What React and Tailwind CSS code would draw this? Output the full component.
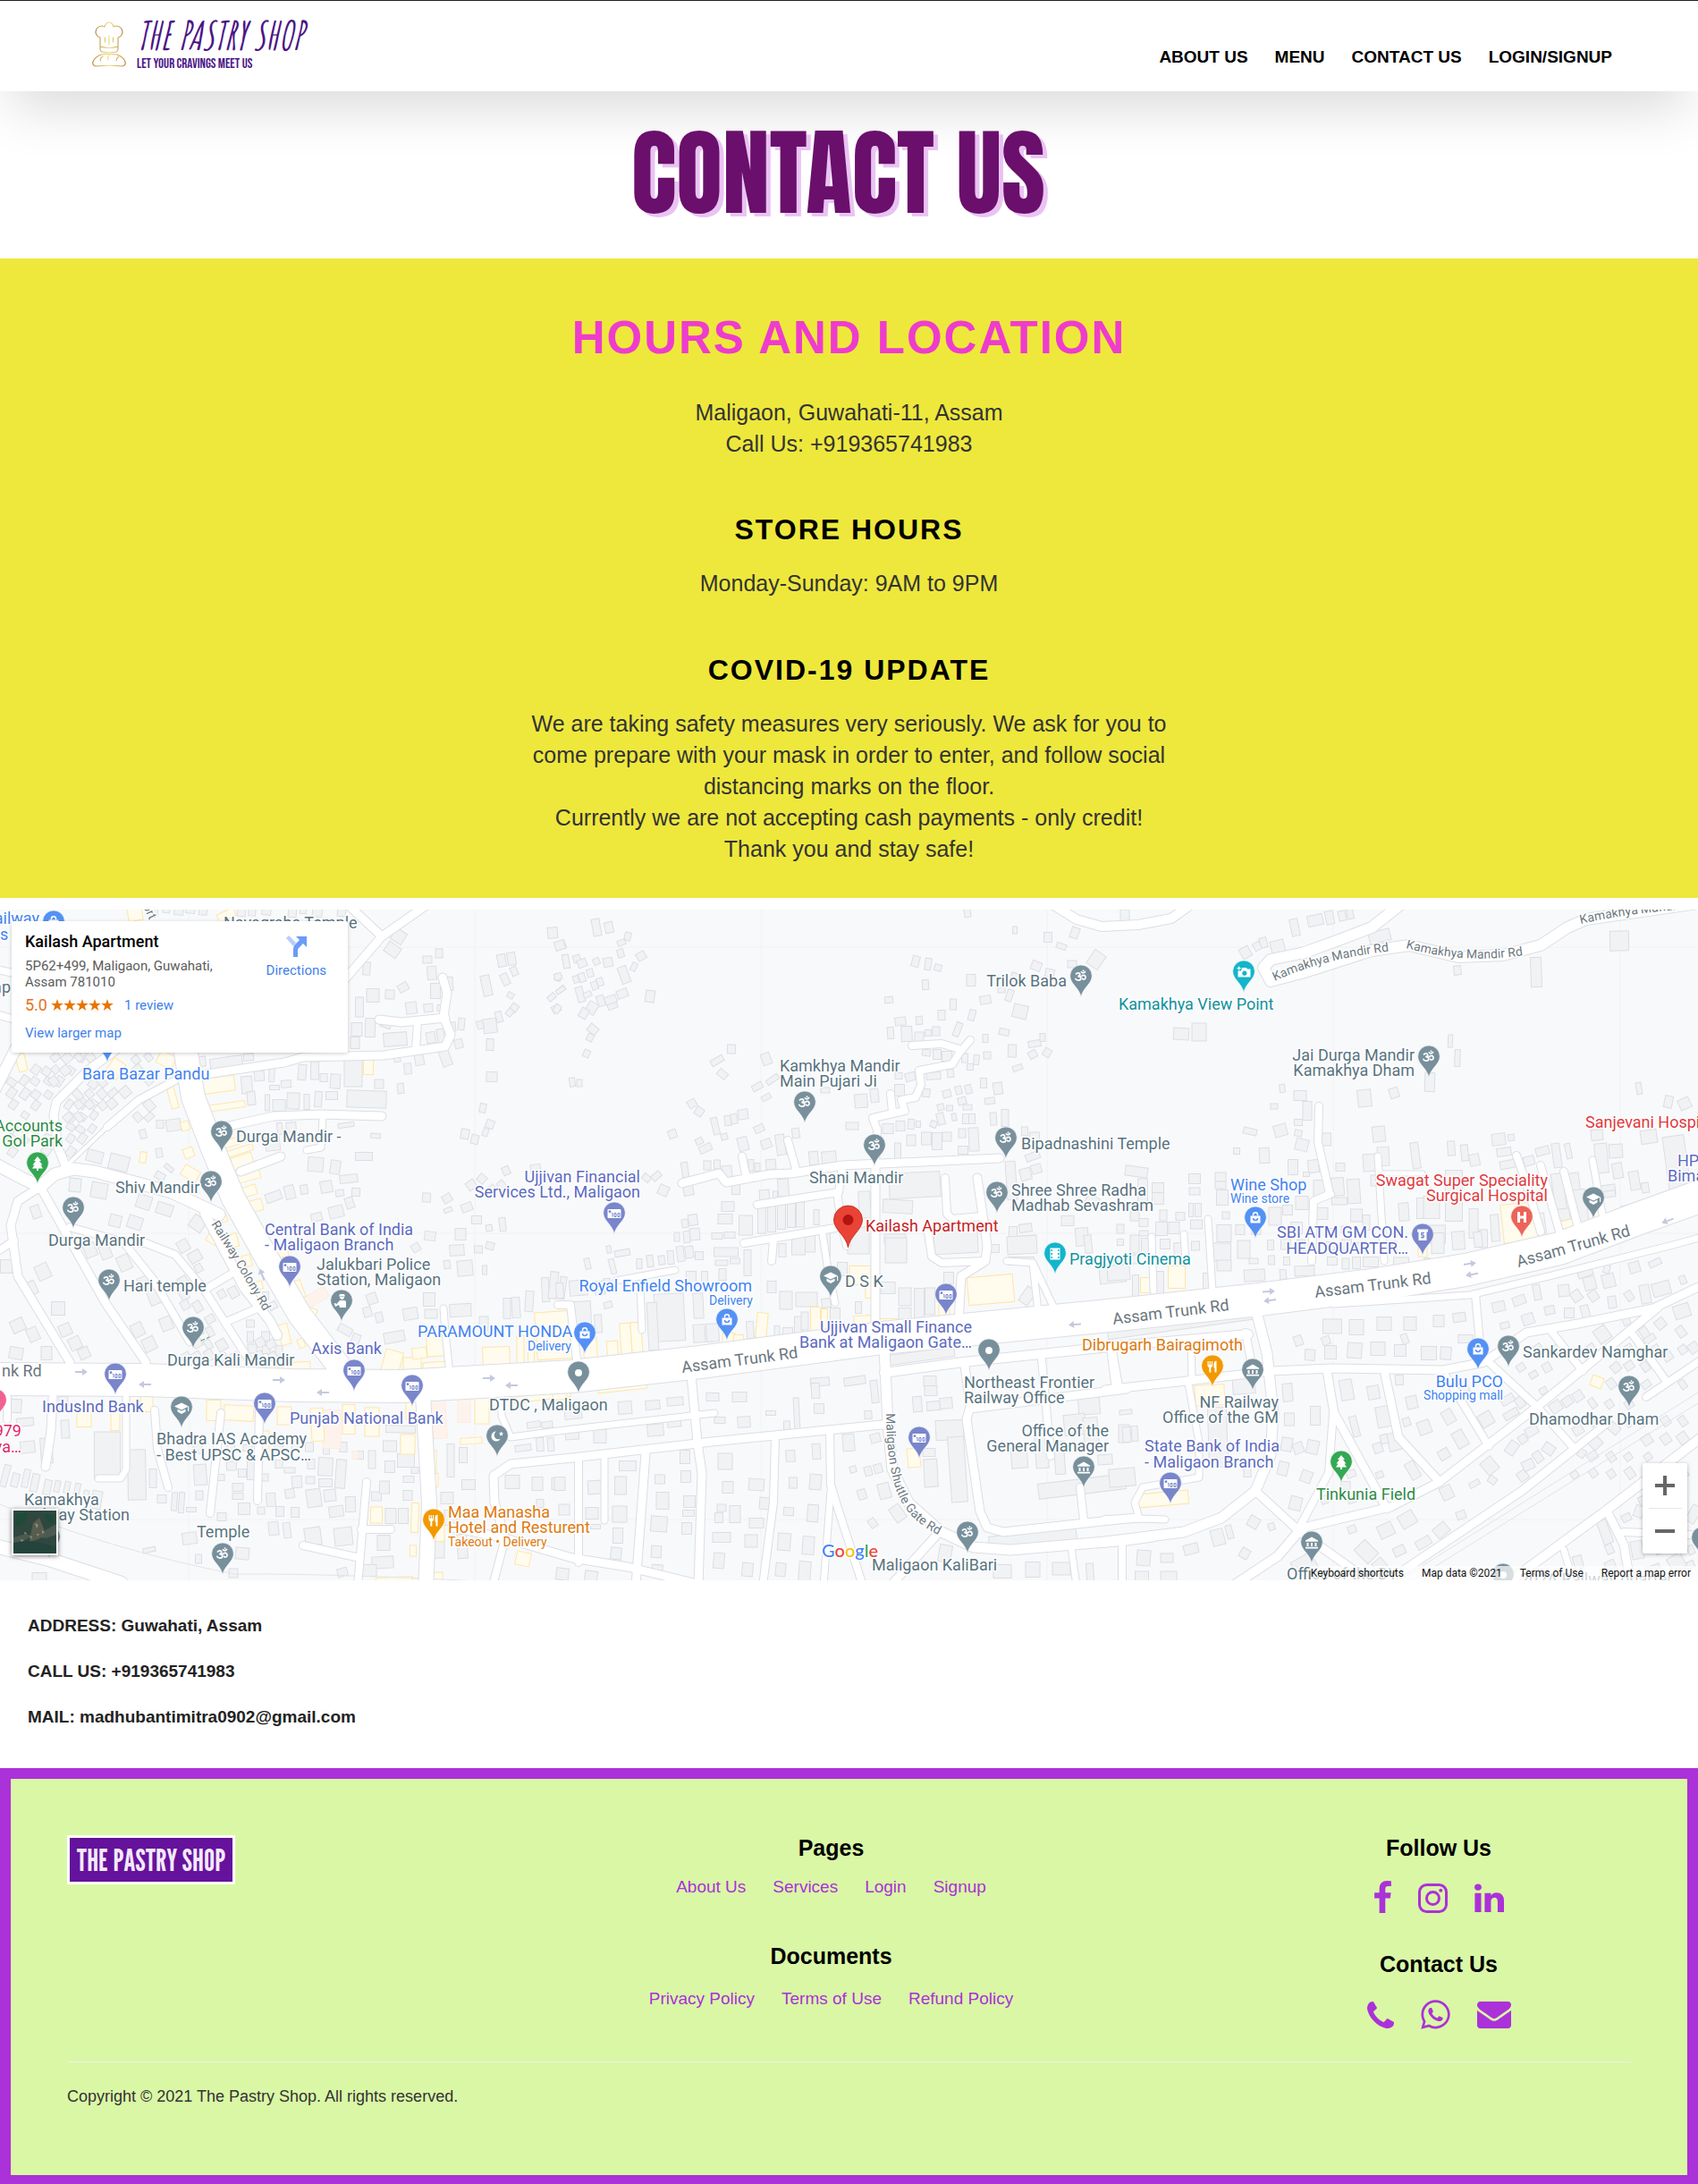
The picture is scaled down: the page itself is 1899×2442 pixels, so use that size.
import React from 'react';
import { FaWhatsapp } from 'react-icons/fa';

/* ------------------------------------------------------------------ */
/* Map data: every sheet has its own origin and scale                  */
/* ------------------------------------------------------------------ */

const SHEETS = {
  A: [0, -7, 2.45],
  B: [0, 363, 2.45],
  C: [620, -7, 2.45],
  D: [620, 363, 2.45],
  E: [1240, -7, 2.379],
  F: [1240, 363, 2.379],
  M: [0, 0, 1],
};

const at = (sheet, x, y) => {
  const [ox, oy, sx] = SHEETS[sheet];
  return sheet === 'M' ? [x, y] : [Math.round(ox + x / sx), Math.round(oy + y / 3)];
};

const ROADS = [
  // [sheet, width, x, y, x, y, ...]
  ['M', 36, -20, 525, 163, 526, 327, 532, 449, 533, 640, 522, 783, 506, 987, 479, 1260, 452, 1408, 436, 1534, 420, 1639, 403, 1744, 379, 1828, 347, 1920, 314],
  ['M', 26, 204, 100, 208, 160, 216, 210, 239, 270, 261, 323, 302, 396, 335, 453, 388, 522],
  ['A', 9, 1200, -20, 1045, 110, 940, 260],
  ['A', 9, 930, -20, 1045, 110],
  ['A', 9, 500, 585, 780, 535, 830, 515, 1050, 510, 1220, 480, 1235, 440, 1215, 380, 1225, 300, 1212, 250],
  ['A', 9, 1040, 390, 1100, 400, 1220, 385],
  ['A', 8, 1145, 400, 1140, 490],
  ['A', 9, 600, 755, 650, 740, 750, 715, 880, 708, 1045, 715],
  ['A', 7, 885, 715, 880, 820, 840, 828],
  ['A', 9, 660, 900, 770, 850],
  ['A', 12, -20, 640, 60, 450],
  ['A', 9, 330, 480, 240, 560, 155, 665, 148, 710, 160, 820, 180, 880],
  ['A', 8, 480, 595, 380, 660, 295, 750],
  ['A', 4, 295, 750, 190, 870],
  ['A', 13, -20, 870, 60, 920, 110, 950, 150, 910, 200, 890, 260, 900, 470, 970, 600, 1045],
  ['A', 9, 110, 950, 50, 1000, 30, 1080, 50, 1250, 190, 1540],
  ['A', 9, 110, 950, 170, 1080, 210, 1170, 290, 1340, 400, 1540],
  ['A', 8, 190, 1085, 330, 1135, 400, 1140, 480, 1180, 560, 1300, 680, 1530],
  ['A', 8, -20, 370, 60, 395],
  ['A', 8, -20, 220, 60, 240],
  ['A', 10, 560, 1040, 600, 1130, 670, 1290, 740, 1400, 760, 1450],
  ['B', 8, 560, 185, 640, 130],
  ['B', 8, 620, 295, 710, 245],
  ['B', 8, 340, 30, 420, 150, 520, 360],
  ['B', 8, -10, 60, 40, 20],
  ['B', 9, 145, 550, 140, 660, 125, 780],
  ['B', 8, 20, 550, 20, 620],
  ['B', 7, 345, 550, 345, 790, 330, 820, 270, 820],
  ['B', 8, 425, 590, 430, 720, 460, 850],
  ['B', 8, 605, 600, 575, 935],
  ['B', 8, 710, 590, 705, 895],
  ['B', 16, 1160, 540, 1175, 900, 1165, 1200],
  ['B', 7, 1230, 440, 1220, 330, 1215, 250],
  ['B', 8, 1005, 830, 980, 1180],
  ['B', 8, 990, 990, 1070, 990],
  ['B', 8, 830, 1045, 975, 1082],
  ['B', 8, 1350, 1180, 1385, 1020],
  ['B', 7, 1375, 560, 1375, 610, 1400, 680, 1568, 655, 1958, 600],
  ['B', 9, 1385, 1020, 1355, 900, 1352, 810, 1400, 770, 1568, 750, 1950, 695, 2440, 635],
  ['B', 9, 1240, 985, 1385, 1020, 1568, 1085, 1720, 1115, 1900, 1170],
  ['B', 15, -20, 1045, 130, 1090, 330, 1170],
  ['D', 9, 375, 470, 393, 700, 405, 800, 395, 1180],
  ['D', 9, 250, 735, 222, 1180],
  ['D', 8, 65, 760, 65, 1100],
  ['D', 7, 138, 750, 138, 960],
  ['D', 8, 605, 685, 600, 900, 572, 1180],
  ['D', 8, 755, 660, 757, 840, 775, 910, 845, 1180],
  ['D', 7, 757, 860, 738, 1180],
  ['D', 11, 903, 380, 915, 640, 925, 790, 970, 900, 1060, 1000, 1150, 1050, 1250, 1060, 1568, 1025, 1640, 1015],
  ['D', 10, 905, 465, 1120, 430, 1568, 372, 1900, 335],
  ['D', 9, 1125, 440, 1140, 580, 1130, 620, 1165, 930, 1185, 985, 1230, 998, 1568, 955, 1600, 950],
  ['D', 9, 1140, 585, 1568, 520],
  ['D', 8, 1335, 420, 1360, 745],
  ['D', 8, 1528, 390, 1545, 510],
  ['D', 8, 1440, 850, 1450, 960],
  ['D', 9, 1045, 1010, 920, 1180],
  ['D', 7, 1415, 1050, 1430, 1180],
  ['D', 8, 10, 238, 45, 238, 62, 420],
  ['D', 7, 235, 170, 240, 320],
  ['D', 7, 170, 155, 330, 120],
  ['D', 8, 600, 20, 595, 90],
  ['D', 9, 880, -240, 880, 310],
  ['D', 8, 1070, -190, 1075, -70, 1090, -50, 1170, -60],
  ['D', 9, 1160, -190, 1187, 40, 1180, 90, 1115, 140, 1108, 300],
  ['D', 8, 1025, -5, 1035, 75, 1060, 95, 1180, 90],
  ['D', 7, 1240, 90, 1310, 95, 1325, 260],
  ['D', 7, 1310, 95, 1370, 250],
  ['D', 7, 735, 0, 750, 120, 770, 230],
  ['C', 8, 520, 1140, 770, 1090],
  ['C', 8, 775, 970, 790, 1090, 800, 1150],
  ['C', 9, 350, 940, 450, 905, 470, 935, 590, 910, 650, 905, 790, 880, 1220, 855],
  ['C', 8, 515, 850, 525, 910],
  ['C', 8, 640, 795, 665, 900],
  ['C', 8, 555, 1010, 780, 970, 790, 880],
  ['C', 8, 880, 870, 885, 760, 872, 720, 960, 695, 950, 660, 990, 650, 1005, 610, 1000, 560, 1090, 540, 1110, 500, 1140, 460],
  ['C', 8, 1110, 490, 1060, 470, 980, 478],
  ['C', 8, 920, 640, 925, 700],
  ['C', 10, 1360, 0, 1430, 55, 1500, 78, 1600, 72, 1690, 50, 1760, -10],
  ['E', 12, 790, -10, 700, 80, 600, 130, 520, 165, 430, 190, 412, 215, 430, 260, 520, 230, 700, 160, 800, 140, 930, 180, 1050, 175, 1150, 140, 1220, 80, 1270, 55, 1568, 0],
  ['E', 8, 560, 680, 556, 800, 585, 960],
  ['E', 8, 540, 1200, 545, 1000, 590, 975],
  ['E', 7, 715, 850, 732, 1200],
  ['E', 5, 730, 905, 835, 905],
  ['E', 7, 265, 1060, 275, 1300],
  ['E', 7, 115, 1120, 120, 1300],
  ['E', 7, 200, 1110, 205, 1200],
  ['E', 8, 1085, 845, 1110, 940, 1150, 1100],
  ['E', 8, 1150, 880, 1200, 1100],
  ['E', 8, 1210, 900, 1250, 1090],
  ['E', 7, 1287, 860, 1315, 1060],
  ['F', 7, 600, 235, 960, 205, 1180, 138, 1500, 35, 1590, 5],
  ['F', 9, -10, 522, 230, 490, 430, 460, 590, 450, 890, 455, 1000, 430, 1110, 330, 1250, 300, 1450, 250, 1590, 165],
  ['F', 11, 395, 270, 420, 400, 438, 600, 430, 740, 390, 860, 300, 950, 200, 1000, -10, 1032],
  ['F', 8, 975, 200, 990, 400, 1010, 430, 1140, 580, 1240, 720],
  ['F', 7, 220, 350, 222, 480],
  ['F', 8, 365, 330, 385, 470],
  ['F', 8, 5, 380, 20, 520],
  ['F', 7, 212, 500, 240, 700, 240, 815, 90, 850, 68, 900, 80, 955, 150, 958],
  ['F', 8, -10, 957, 80, 955],
  ['F', 9, 1460, 245, 1140, 580, 880, 830, 750, 915, 500, 990],
  ['F', 8, 1180, 330, 1260, 460],
  ['F', 8, 1395, 335, 1480, 485],
  ['F', 8, 1430, 545, 1590, 410],
  ['F', 8, 1240, 720, 1320, 640],
  ['F', 9, 580, 460, 600, 600, 740, 920],
  ['F', 8, 597, 600, 585, 800, 505, 990],
  ['F', 9, 735, 470, 770, 680, 880, 830],
  ['F', 8, 900, 480, 1010, 710],
  ['F', 9, 390, 860, 510, 1000, 700, 1170],
  ['F', 10, 505, 1000, 450, 1080, 330, 1180],
  ['F', 9, 1240, 720, 1100, 860, 780, 1130, 700, 1180],
  ['F', 10, 1590, 670, 1320, 930, 1060, 1170],
  ['F', 9, 1330, 940, 1370, 1040, 1390, 1180],
  ['F', 8, 1370, 1000, 1590, 1010],
  ['F', 8, 35, 1040, 35, 1180],
  ['F', 7, 1210, 1060, 1235, 1160],
].map(([s, w, ...c]) => {
  const pts = [];
  for (let i = 0; i < c.length; i += 2) pts.push(at(s, c[i], c[i + 1]));
  return { w, pts, d: 'M' + pts.map((p) => p.join(' ')).join('L') };
});

// Loose buildings: sheet then [centre x, centre y, width, height, turn]
const LOOSE = {
  A: [
    [1515, 98, 26, 36, -5], [1535, 140, 26, 26, -20], [1202, 167, 20, 30, 0], [1172, 190, 24, 24, 0], [1184, 235, 24, 46, -4], [1232, 270, 18, 44, -4],
    [1375, 192, 22, 42, -10], [1402, 186, 22, 42, -10], [1385, 255, 20, 40, -25], [1408, 228, 16, 30, -25], [1334, 275, 24, 68, -12], [1528, 248, 18, 22, 20],
    [1538, 288, 20, 16, -40], [1511, 316, 22, 18, -40], [1550, 195, 18, 44, -10], [1400, 308, 16, 18, 30], [1525, 354, 22, 24, -30], [1408, 352, 20, 28, 35],
    [1366, 380, 18, 36, -15], [1396, 366, 18, 24, 40], [1342, 410, 36, 48, -8], [1316, 408, 16, 28, -15], [1342, 475, 20, 40, 2], [1263, 405, 16, 38, 6],
    [1240, 415, 16, 30, -5], [1258, 472, 22, 30, -15], [1348, 583, 30, 32, 2], [1106, 283, 28, 28, -30], [1068, 306, 24, 30, 2], [1022, 308, 34, 44, 0],
    [1128, 352, 30, 38, -8], [1173, 350, 24, 28, -5], [1093, 110, 34, 42, 32], [1075, 155, 40, 40, 35], [1005, 220, 20, 42, 4], [986, 348, 22, 66, 0],
    [1194, 295, 26, 52, 0], [1205, 350, 14, 22, 0], [1015, 416, 26, 64, 2], [978, 424, 30, 46, 0], [1058, 402, 30, 30, 20], [1083, 456, 64, 46, -4],
    [1180, 450, 24, 36, -10], [1208, 445, 20, 44, -10], [972, 468, 24, 40, 0], [620, 535, 88, 36, -8], [548, 532, 30, 32, -4], [680, 516, 26, 24, -5],
    [1220, 516, 28, 60, -20], [1150, 526, 24, 36, -10], [1088, 520, 18, 28, -10], [1118, 554, 20, 36, -5], [1098, 622, 18, 32, -6], [1040, 606, 24, 30, 0],
    [1004, 658, 108, 56, 2], [967, 568, 50, 96, 0], [918, 597, 28, 48, 4], [888, 584, 20, 26, 0], [862, 560, 22, 60, 0], [827, 567, 22, 50, 4], [746, 574, 14, 52, 4],
    [676, 608, 30, 56, -4], [688, 654, 22, 44, -5], [710, 578, 26, 34, -5], [752, 619, 26, 14, 0], [785, 605, 28, 24, -5], [765, 677, 34, 40, 0], [733, 670, 12, 54, 0],
    [804, 662, 34, 54, 2], [840, 666, 14, 50, 0], [872, 656, 20, 52, 4], [908, 646, 32, 28, 0], [948, 745, 44, 14, -8], [1029, 781, 26, 14, 4], [1324, 686, 18, 30, 12],
    [1274, 774, 22, 34, 10], [1302, 793, 20, 30, 14], [1330, 768, 14, 26, 18], [1342, 742, 22, 28, 20], [998, 849, 46, 26, 0], [865, 876, 42, 48, 4], [918, 884, 28, 44, 8],
    [955, 925, 48, 28, -6], [895, 952, 32, 38, -10], [932, 971, 22, 22, -8], [976, 968, 22, 26, 4], [747, 808, 38, 44, -6], [798, 766, 28, 60, -5], [768, 756, 14, 40, -8],
    [1386, 898, 20, 26, -25], [1468, 892, 26, 30, -8], [1168, 986, 22, 30, 2], [1228, 1028, 22, 14, -20], [1225, 990, 24, 26, -30], [1280, 1020, 30, 28, -20],
    [1320, 925, 22, 26, 40], [1345, 960, 26, 20, -45], [1290, 945, 24, 30, -35], [1374, 945, 20, 26, -40], [1306, 1062, 28, 26, 0], [1262, 1110, 30, 40, 0],
    [1376, 1078, 16, 46, -6], [1340, 1088, 16, 22, -10], [1178, 1115, 30, 30, 8], [750, 985, 44, 30, -20], [795, 970, 26, 44, -15], [834, 960, 20, 30, -10],
    [920, 1035, 38, 40, -14], [958, 1005, 22, 36, -18], [868, 1052, 30, 26, -14], [475, 743, 38, 40, -8], [438, 740, 20, 26, 0], [393, 774, 18, 30, -15],
    [437, 838, 16, 30, -10], [260, 850, 44, 40, 15], [327, 870, 54, 50, 14], [464, 887, 26, 16, 40], [438, 915, 26, 24, 30], [206, 946, 32, 46, 6], [273, 962, 44, 50, 10],
    [395, 1002, 38, 46, 18], [450, 1026, 44, 40, 18], [316, 1066, 32, 40, 14], [370, 1072, 38, 42, 18], [542, 1074, 38, 44, 35], [98, 1036, 24, 42, -20],
  ],
  B: [
    [118, 125, 36, 50, -25], [84, 182, 34, 44, -25], [160, 248, 36, 46, 0], [50, 305, 36, 42, -25], [90, 335, 30, 44, -25], [45, 400, 36, 40, 10], [128, 400, 30, 44, 0],
    [180, 320, 32, 40, -25], [205, 365, 32, 42, -25], [230, 400, 30, 36, -25], [247, 55, 32, 44, -22], [290, 60, 30, 44, -22], [18, 108, 32, 44, 0], [340, 95, 34, 50, -25],
    [395, 165, 30, 44, -22], [425, 210, 34, 52, -22], [455, 300, 32, 46, -22], [378, 320, 32, 46, -25], [410, 370, 34, 46, -25], [502, 40, 30, 40, -30], [535, 75, 34, 36, -30],
    [1140, 45, 22, 26, -30], [1252, 55, 38, 36, -4], [1310, 50, 22, 24, 0], [1342, 40, 22, 24, 15], [1275, 115, 42, 50, -5], [1327, 120, 12, 30, 0], [1226, 102, 16, 28, -8],
    [1175, 220, 32, 44, 0], [1262, 256, 60, 42, -3], [1020, 216, 26, 36, -18], [1006, 260, 22, 34, -14], [1040, 280, 20, 34, -14], [1125, 266, 38, 40, -10], [1182, 266, 34, 30, 0],
    [1080, 345, 56, 36, -10], [945, 320, 38, 26, 30], [975, 350, 22, 34, 20], [1388, 248, 20, 70, 0], [1414, 245, 22, 70, -4], [1450, 226, 22, 70, 4], [1495, 185, 20, 80, -3],
    [1516, 170, 22, 90, 6], [1540, 180, 18, 76, 8], [1325, 300, 24, 48, 0], [44, 575, 30, 46, 4], [174, 568, 24, 46, 0], [128, 725, 32, 84, -4], [68, 630, 46, 28, -4], [76, 715, 40, 38, -6],
    [178, 655, 22, 60, -4], [295, 740, 70, 156, 0], [376, 806, 50, 168, -1], [420, 820, 20, 64, 0], [550, 808, 34, 68, -4], [606, 816, 20, 20, 0], [635, 778, 26, 30, 0], [665, 800, 22, 26, 0],
    [692, 790, 26, 70, 0], [724, 816, 20, 24, 0], [794, 793, 30, 18, 0], [813, 830, 26, 40, -4], [652, 850, 30, 28, 0], [652, 878, 30, 20, 0], [793, 870, 24, 30, -10], [742, 892, 24, 46, -4],
    [670, 922, 32, 40, 0], [893, 780, 40, 60, 3], [934, 804, 28, 96, 4], [892, 834, 36, 26, 0], [860, 886, 38, 60, -8], [905, 876, 32, 40, -6], [960, 906, 28, 50, -2], [920, 930, 40, 36, -8],
    [1053, 850, 28, 42, 0], [1070, 946, 30, 50, 0], [1104, 946, 26, 50, 0], [750, 988, 26, 46, -6], [786, 992, 20, 52, -8], [858, 1014, 44, 60, -8], [940, 1015, 50, 60, -6], [1052, 1036, 34, 50, 0],
    [1048, 1100, 60, 40, -3], [1006, 1128, 50, 40, 0], [410, 1060, 34, 14, -12], [663, 1070, 36, 40, 6], [640, 1136, 24, 30, 0], [938, 1134, 28, 26, -15], [520, 1020, 40, 40, -8], [544, 1088, 18, 30, 0],
    [1067, 710, 36, 36, 0], [1112, 758, 46, 46, 0], [1018, 756, 20, 60, 0], [988, 740, 16, 26, 0], [1136, 793, 20, 20, 0], [1068, 780, 26, 40, 0], [1098, 654, 80, 24, 2], [1120, 823, 30, 20, 0],
    [1224, 886, 34, 40, 0], [1236, 950, 34, 50, 0], [1204, 1056, 30, 60, 0], [1266, 1046, 28, 80, -4], [1283, 840, 36, 34, 0], [1236, 760, 20, 110, 0], [1268, 740, 22, 50, 0],
    [1404, 830, 38, 46, 0], [1472, 838, 30, 46, 0], [1530, 836, 34, 40, 0], [1480, 902, 20, 26, 0], [1545, 925, 30, 36, 0], [1434, 716, 44, 20, -8], [1480, 706, 20, 46, -4], [1508, 704, 18, 46, -4],
    [1462, 640, 36, 22, -8], [1500, 640, 30, 20, -8], [108, 1148, 40, 26, 0], [42, 826, 20, 46, 15], [15, 810, 16, 76, 15], [72, 820, 18, 60, 12], [96, 835, 20, 60, 12], [130, 850, 20, 50, 12], [156, 845, 14, 40, 12], [184, 850, 14, 40, 12],
    [210, 860, 14, 50, 12], [235, 880, 14, 40, 12], [265, 890, 26, 60, 10], [443, 888, 24, 26, 0], [478, 896, 14, 60, 4], [498, 900, 14, 70, 4], [524, 925, 26, 16, 0], [608, 948, 24, 26, 0],
  ],
  C: [
    [115, 80, 22, 56, -10], [150, 82, 22, 36, -12], [15, 140, 28, 30, -18], [200, 112, 16, 28, 14], [184, 132, 22, 18, -20], [181, 167, 18, 26, -18], [238, 178, 24, 26, -30],
    [33, 195, 18, 46, -10], [61, 186, 20, 24, -20], [77, 202, 24, 28, -20], [115, 194, 18, 20, -25], [148, 199, 24, 30, -10], [217, 212, 14, 28, 25], [192, 240, 24, 56, -20],
    [58, 255, 14, 24, -18], [76, 250, 18, 30, -18], [97, 234, 16, 26, -15], [10, 246, 20, 22, -18], [16, 290, 26, 16, -35], [110, 275, 16, 28, -20], [126, 264, 16, 26, -20],
    [70, 305, 20, 50, -16], [90, 306, 22, 18, -25], [128, 328, 20, 36, -18], [154, 323, 32, 26, -20], [185, 304, 30, 26, -20], [160, 345, 26, 18, -20], [104, 350, 26, 38, 30],
    [80, 370, 22, 34, 30], [8, 354, 18, 28, 30], [263, 312, 24, 40, 8], [105, 422, 28, 26, 40], [97, 450, 18, 24, 30], [89, 504, 16, 24, 25], [50, 601, 14, 30, -8], [68, 604, 14, 24, 0],
    [485, 488, 22, 30, 2], [446, 528, 36, 22, -30], [461, 572, 26, 24, 40], [580, 523, 24, 38, -20], [597, 592, 36, 18, -35], [556, 616, 30, 20, -30], [581, 652, 24, 18, -30],
    [378, 673, 22, 28, -30], [397, 698, 22, 26, 35], [518, 707, 28, 34, -8], [440, 748, 16, 56, -14], [475, 730, 16, 34, -5], [492, 724, 18, 34, -10], [562, 757, 28, 24, -25],
    [465, 784, 16, 22, -15], [323, 774, 22, 26, -20], [397, 798, 20, 20, -25], [413, 822, 34, 24, -25], [518, 806, 26, 46, -15], [581, 806, 26, 30, -20], [661, 771, 20, 32, -8],
    [620, 810, 24, 70, -8], [743, 628, 24, 18, 0], [840, 662, 34, 44, -4], [876, 645, 22, 46, -6], [817, 748, 34, 24, 0], [710, 855, 24, 46, -5], [752, 853, 38, 38, -5],
    [357, 895, 16, 50, -8], [420, 880, 20, 30, 0], [445, 876, 18, 30, 0], [474, 900, 26, 40, -5], [538, 880, 14, 40, 0], [556, 884, 14, 26, 0], [592, 877, 26, 34, -5],
    [253, 920, 22, 22, 40], [280, 916, 26, 20, -40], [298, 963, 26, 32, 25], [368, 963, 26, 34, -10], [498, 958, 22, 40, 0], [628, 955, 30, 60, -4], [604, 980, 12, 30, 0],
    [576, 980, 26, 40, -4], [475, 1016, 34, 32, 0], [468, 1060, 38, 34, 0], [525, 1080, 36, 66, 0], [568, 1062, 22, 90, 0], [595, 1058, 22, 86, 0], [622, 1050, 22, 86, 0], [650, 1045, 22, 86, 0],
    [674, 1045, 22, 84, 0], [718, 1052, 14, 50, 0], [380, 1062, 24, 36, -8], [358, 1073, 16, 26, -8], [336, 1120, 14, 30, 0], [385, 1110, 26, 40, -5], [362, 1118, 16, 40, -5], [445, 1117, 30, 22, 0], [480, 1113, 30, 22, 0],
    [850, 1010, 32, 90, -3], [940, 1018, 80, 46, 3], [988, 945, 140, 84, -3], [933, 1125, 60, 30, 0],
    [916, 324, 22, 20, -5], [1017, 272, 16, 34, -4], [990, 194, 20, 36, 15], [1024, 203, 18, 38, 8], [1050, 216, 20, 22, 15], [1141, 258, 24, 38, 0], [1132, 34, 18, 28, -10], [1262, 90, 12, 24, 0],
    [1353, 114, 22, 34, 0], [1427, 100, 22, 36, 20], [1389, 145, 28, 18, 20], [1485, 190, 36, 54, 35], [1418, 205, 24, 24, 0], [1321, 210, 26, 30, 20], [1357, 234, 24, 26, 12], [1262, 250, 22, 30, 20],
    [1225, 292, 20, 18, 0], [1248, 308, 16, 38, 20], [1180, 324, 30, 28, -10], [1277, 364, 38, 46, 14], [1145, 374, 18, 36, 15], [1092, 338, 16, 36, 2], [1061, 376, 20, 34, 0], [1106, 422, 16, 48, 22],
    [1000, 392, 16, 28, -6], [948, 397, 30, 26, -8], [965, 437, 30, 50, -3], [920, 434, 18, 40, -4], [1000, 450, 24, 36, 0], [1024, 434, 16, 22, 0], [1045, 430, 20, 30, 0], [1182, 452, 14, 26, 0],
    [1233, 432, 28, 22, 12], [1254, 494, 22, 42, 2], [1316, 472, 34, 22, -10], [1338, 450, 14, 26, 0], [1310, 506, 22, 24, -30], [1350, 500, 20, 28, 30], [1187, 511, 20, 24, 0], [1156, 526, 14, 34, 5],
    [1125, 520, 16, 30, 0], [1140, 550, 18, 22, 0], [1269, 551, 26, 18, -20], [1020, 502, 22, 22, 8], [1048, 508, 22, 34, 0], [1076, 512, 28, 34, 0], [1038, 580, 38, 24, -4], [1086, 570, 18, 26, -8],
    [944, 578, 20, 22, 0], [976, 582, 26, 26, -15], [945, 626, 26, 40, 0], [1019, 636, 20, 28, 6], [1076, 638, 22, 24, -15], [1108, 628, 16, 28, -15], [1134, 624, 16, 30, -15], [1175, 604, 16, 34, 0],
    [1216, 622, 24, 38, -8], [1194, 662, 28, 22, -8], [1116, 662, 22, 24, -15], [1132, 684, 24, 18, 0], [1058, 684, 18, 22, -15], [1082, 686, 16, 18, 0], [1058, 722, 20, 40, -14], [1094, 718, 12, 24, -10],
    [1128, 722, 16, 32, 0], [1145, 722, 16, 32, 0], [1202, 722, 16, 42, -4], [1234, 720, 20, 58, 0], [1040, 742, 16, 20, 20], [978, 740, 16, 34, 4], [998, 742, 12, 22, 0], [948, 748, 24, 34, 0], [914, 756, 30, 32, 0],
    [978, 796, 24, 36, 0], [1020, 790, 26, 42, 0], [1048, 798, 28, 56, 0], [1076, 782, 24, 30, 0], [1117, 772, 20, 30, 0], [1148, 793, 28, 78, -3], [1120, 828, 28, 26, 0], [940, 832, 18, 54, 0],
    [1288, 765, 18, 30, 0], [1316, 785, 26, 36, 0], [1310, 850, 40, 24, -20], [1292, 908, 30, 40, -15], [1320, 890, 26, 30, -15], [1252, 930, 28, 130, -4], [1406, 1066, 34, 34, 0], [1290, 1090, 34, 28, -8],
    [1280, 1130, 70, 30, -4], [1256, 1108, 22, 44, 0], [1445, 1120, 34, 60, -4], [1475, 995, 34, 30, 30],
  ],
  D: [
    [90, 98, 14, 36, -14], [150, 52, 12, 24, -10], [185, 62, 42, 22, -10], [160, 108, 14, 50, -14], [232, 100, 14, 34, 0], [262, 90, 16, 40, -8], [295, 86, 18, 30, -8], [318, 78, 18, 44, -4],
    [345, 65, 20, 50, -8], [370, 60, 22, 40, -8], [398, 72, 22, 26, 0], [470, 60, 66, 30, 0], [458, 95, 34, 18, 0], [494, 90, 28, 18, 0], [530, 95, 20, 88, 0], [460, 134, 20, 38, 0], [412, 150, 18, 52, 0],
    [375, 150, 26, 50, 0], [395, 240, 26, 84, -3], [315, 280, 80, 160, -3], [270, 310, 28, 160, -3], [146, 238, 22, 20, -15], [120, 300, 20, 60, -4], [78, 270, 44, 90, -3], [125, 180, 26, 44, -4],
    [65, 180, 50, 50, -4], [15, 190, 20, 50, -4], [145, 170, 18, 46, -3], [396, 334, 32, 60, -3], [434, 330, 34, 60, -3], [536, 320, 20, 56, -4], [634, 222, 34, 60, 0], [596, 176, 24, 40, 0],
    [692, 220, 60, 48, 0], [668, 306, 22, 60, 0], [685, 290, 20, 60, 0], [610, 328, 14, 40, 0], [640, 330, 26, 34, 0], [744, 232, 24, 30, -8], [770, 275, 28, 56, 0], [790, 118, 26, 46, 0],
    [832, 246, 16, 38, 0], [625, 55, 20, 44, 0], [668, 40, 36, 60, 0], [700, 30, 26, 60, 0], [745, 30, 22, 90, 0], [834, 20, 60, 90, 0], [935, 55, 58, 84, 0], [1100, 20, 120, 86, -3],
    [915, 180, 40, 40, 0], [960, 210, 34, 60, 0], [1000, 230, 26, 100, 0], [1030, 226, 26, 90, 0], [1080, 148, 26, 40, 0], [960, 270, 34, 44, 0], [1202, 48, 32, 26, 0], [1282, 36, 80, 60, -3], [1278, 90, 70, 28, 0],
    [1295, 206, 30, 58, 35], [1528, 130, 70, 70, -6], [1462, 34, 20, 60, -6], [1008, 408, 180, 34, -8], [434, 546, 34, 28, 0], [506, 545, 38, 32, 0], [728, 495, 52, 26, -4], [716, 526, 22, 50, -3], [822, 493, 60, 28, -8],
    [876, 528, 20, 74, -6], [453, 624, 30, 22, 0], [519, 630, 34, 36, -4], [592, 600, 26, 16, 0], [636, 642, 18, 30, 0], [664, 602, 14, 108, -3], [724, 586, 26, 34, 0], [860, 606, 20, 28, -4],
    [1028, 492, 34, 32, 0], [1032, 524, 34, 32, 0], [994, 570, 24, 52, -5], [1038, 577, 36, 30, -5], [1074, 566, 34, 36, -5], [1082, 656, 76, 66, -3], [1105, 790, 44, 220, -4], [1032, 802, 36, 94, -3], [1026, 732, 34, 26, 0],
    [194, 583, 36, 42, -4], [270, 573, 40, 30, -5], [330, 561, 44, 28, -5], [52, 600, 46, 38, -6], [50, 675, 36, 26, -4], [126, 678, 34, 44, 0], [276, 658, 44, 38, -5], [328, 634, 36, 26, -6],
    [110, 848, 36, 46, -3], [15, 838, 30, 44, 0], [182, 844, 32, 60, 0], [200, 776, 46, 32, 0], [178, 938, 38, 54, 0], [102, 935, 34, 38, 0], [112, 980, 28, 16, 0], [174, 1010, 28, 50, 0], [170, 1070, 30, 40, 6],
    [288, 823, 26, 30, 0], [296, 895, 34, 56, 0], [287, 973, 44, 50, 4], [280, 1066, 26, 40, 4], [282, 1125, 30, 34, 4], [358, 748, 26, 46, 0], [360, 814, 28, 40, 0], [369, 898, 32, 40, 0], [368, 935, 32, 20, 0],
    [362, 988, 28, 40, 0], [468, 763, 38, 54, 0], [475, 848, 30, 38, 0], [554, 841, 42, 40, 4], [575, 902, 28, 40, 4], [494, 938, 30, 56, 0], [459, 918, 24, 24, 0], [452, 950, 22, 34, 0], [458, 1016, 50, 34, 0],
    [554, 970, 40, 32, 0], [538, 1028, 34, 42, 0], [450, 1095, 30, 50, 5], [528, 1124, 30, 44, 6], [646, 743, 24, 38, -4], [717, 730, 22, 50, -4], [653, 834, 22, 36, 0], [716, 830, 32, 50, 4], [642, 930, 26, 28, 4],
    [709, 935, 30, 56, 4], [630, 1032, 34, 56, 4], [696, 1043, 32, 60, 4], [620, 1126, 26, 46, 6], [685, 1130, 32, 66, 4], [806, 700, 32, 56, -4], [879, 685, 26, 30, -15], [819, 790, 18, 22, -15], [860, 796, 20, 30, -15],
    [886, 785, 22, 30, -15], [843, 872, 22, 34, -18], [905, 860, 32, 50, -15], [940, 935, 32, 54, -35], [872, 968, 20, 30, -35], [1228, 1132, 50, 44, 0], [1310, 1126, 38, 50, 0], [1390, 1122, 50, 42, 0], [1468, 1135, 20, 60, -4],
    [1070, 1070, 34, 56, 10], [1310, 1020, 240, 44, -7], [1466, 575, 60, 56, -4], [1425, 640, 60, 70, -6], [1275, 750, 44, 70, -4], [1335, 730, 34, 110, -4], [1384, 750, 26, 110, -4], [1470, 660, 40, 90, -4], [1508, 756, 38, 32, -4],
    [1445, 845, 240, 50, -7], [1560, 670, 30, 60, 0], [22, 1140, 34, 40, 8], [100, 1150, 34, 40, 8],
  ],
  E: [
    [42, 50, 24, 60, 0], [494, 80, 22, 56, -12], [550, 57, 40, 36, -12], [588, 48, 22, 46, -12], [622, 42, 18, 34, -12], [642, 36, 16, 34, -12], [412, 132, 20, 34, -15], [365, 165, 26, 36, -30], [394, 145, 20, 26, -30],
    [450, 146, 36, 44, -14], [720, 112, 56, 38, -14], [928, 225, 18, 30, -6], [1138, 232, 28, 98, -2], [1358, 126, 50, 66, -1], [193, 438, 40, 38, 3], [240, 432, 38, 60, 0], [909, 462, 12, 42, 2], [927, 518, 14, 58, 2],
    [854, 600, 26, 64, 2], [461, 620, 14, 26, -6], [508, 646, 34, 34, 0], [528, 695, 24, 64, 0], [441, 680, 20, 18, 0], [681, 655, 36, 58, -6], [760, 637, 24, 34, -18], [504, 736, 22, 22, 0], [504, 771, 20, 22, 12],
    [456, 763, 34, 40, -15], [377, 764, 36, 20, 14], [513, 810, 34, 38, 14], [575, 792, 32, 42, 0], [341, 830, 16, 20, 0], [413, 845, 26, 52, -3], [719, 774, 34, 52, -6], [694, 870, 36, 58, -4], [731, 850, 30, 64, -3],
    [816, 846, 22, 86, -8], [910, 821, 18, 48, -4], [946, 836, 18, 54, -6], [973, 862, 26, 40, -12], [1038, 793, 36, 40, -8], [1071, 787, 16, 20, -8], [1051, 835, 38, 26, -8], [1060, 877, 40, 26, -10], [1118, 864, 28, 30, -15],
    [1155, 830, 36, 28, -15], [1192, 845, 22, 80, -8], [1222, 832, 14, 50, -12], [1300, 776, 30, 36, -6], [1310, 855, 34, 100, -5], [1348, 830, 36, 44, -4], [1353, 896, 26, 50, -10], [1398, 930, 26, 62, -10], [1427, 954, 20, 34, -10],
    [1411, 622, 14, 38, -10], [1490, 666, 22, 40, 12], [1533, 671, 30, 36, -25], [1437, 783, 42, 44, -8], [1510, 870, 56, 180, -8], [74, 899, 60, 34, 8], [229, 925, 32, 34, 0], [228, 967, 28, 24, 0], [220, 1028, 12, 46, 0],
    [238, 1028, 16, 46, 0], [131, 954, 32, 32, 0], [130, 990, 30, 40, 0], [298, 918, 28, 30, 0], [298, 945, 28, 24, 0], [301, 986, 30, 52, 0], [91, 950, 26, 54, 0], [91, 1000, 26, 46, 0], [92, 1070, 24, 28, 0], [92, 1107, 24, 18, 0],
    [140, 1092, 30, 44, 0], [173, 1090, 28, 40, 0], [233, 1077, 30, 30, 0], [308, 1106, 38, 56, 0], [490, 885, 26, 50, 0], [545, 882, 28, 42, -6], [615, 886, 24, 28, 0], [525, 910, 16, 14, 0], [563, 958, 38, 56, 0],
    [608, 950, 34, 60, -4], [651, 965, 34, 80, -4], [614, 1000, 40, 24, 0], [513, 1005, 34, 44, 0], [567, 1042, 34, 40, 0], [658, 1048, 32, 42, 0], [686, 1072, 18, 50, 0], [784, 1036, 26, 60, -4], [706, 930, 20, 36, 0],
    [830, 1022, 22, 70, 0], [860, 1020, 44, 76, 0], [918, 980, 46, 170, 0], [970, 1075, 24, 100, 0], [1028, 1090, 22, 90, -4], [997, 1125, 22, 60, 0], [1200, 980, 30, 150, -8], [1240, 960, 30, 110, -8], [1152, 1075, 20, 70, -8],
    [1328, 960, 40, 30, -8], [1332, 975, 30, 20, -8], [1374, 1030, 22, 30, -8], [1212, 1044, 30, 40, -8], [1256, 1020, 34, 120, -8], [442, 1050, 34, 60, 0], [475, 1030, 26, 34, 0], [500, 1090, 30, 40, 0], [870, 1110, 50, 60, 0],
  ],
  F: [
    [31, 27, 16, 20, 0], [70, 34, 24, 60, 0], [100, 40, 26, 50, 0], [25, 130, 60, 50, -4], [72, 175, 16, 76, 0], [132, 165, 32, 80, 0], [190, 50, 34, 44, -4], [260, 155, 16, 50, 0], [300, 60, 50, 60, 0], [306, 105, 38, 36, 0],
    [388, 138, 54, 40, -4], [386, 90, 24, 18, 0], [360, 50, 34, 60, 0], [464, 134, 16, 34, -4], [520, 123, 52, 34, -2], [631, 100, 18, 36, 0], [660, 97, 22, 40, 0], [698, 92, 40, 34, 0], [778, 92, 40, 30, 0], [846, 95, 14, 34, 0],
    [876, 30, 34, 70, 0], [930, 20, 34, 60, -4], [982, 18, 22, 50, -6], [190, 300, 390, 40, -8], [594, 308, 50, 48, 0], [658, 312, 38, 50, 0], [732, 300, 38, 46, 0], [801, 299, 34, 46, 0], [879, 290, 28, 40, 0], [933, 278, 34, 30, -8],
    [535, 404, 26, 36, 4], [591, 395, 32, 46, 0], [654, 390, 38, 50, 4], [717, 383, 38, 44, 0], [776, 390, 32, 40, 0], [852, 398, 40, 44, 0], [898, 398, 28, 42, 4], [950, 352, 38, 26, 0],
    [634, 522, 34, 68, -10], [774, 490, 22, 34, -4], [704, 530, 30, 44, -10], [475, 530, 26, 60, -4], [481, 620, 26, 42, 0], [549, 608, 26, 62, 0], [474, 705, 28, 46, 10], [543, 714, 32, 46, 12], [464, 787, 26, 44, 14],
    [526, 812, 28, 38, 20], [498, 902, 32, 44, 14], [655, 645, 20, 70, -15], [733, 612, 40, 70, -10], [760, 696, 34, 60, -15], [732, 686, 18, 30, -15], [807, 564, 28, 42, -12], [840, 648, 34, 44, -20], [809, 793, 26, 60, -30],
    [893, 739, 28, 34, -30], [935, 688, 32, 56, -30], [904, 612, 28, 48, -30], [944, 515, 24, 40, -25], [1005, 622, 36, 44, -30], [900, 867, 30, 46, -25], [972, 838, 28, 18, -30], [1013, 778, 40, 44, 50], [1020, 824, 22, 24, 35],
    [1072, 716, 26, 46, 35], [1116, 773, 30, 32, -25], [1170, 720, 30, 34, 35], [1125, 660, 34, 30, -30], [1062, 556, 36, 28, -30], [1070, 604, 40, 24, -30], [1190, 580, 30, 36, -35], [1220, 560, 26, 30, -35], [1248, 542, 26, 32, -35],
    [1250, 656, 26, 30, -30], [1295, 700, 30, 40, 45], [1258, 736, 20, 28, 30], [1345, 650, 30, 30, 40], [1038, 242, 34, 34, -12], [1093, 222, 34, 30, -20], [1140, 195, 20, 50, -10], [1116, 284, 32, 36, -18], [1172, 256, 26, 26, -12],
    [1224, 263, 26, 34, 0], [1268, 262, 22, 44, -15], [1210, 190, 28, 40, -6], [1280, 165, 30, 46, -15], [1330, 155, 34, 46, -14], [1326, 118, 16, 26, 15], [1268, 132, 40, 20, -20], [1400, 112, 28, 36, -15], [1453, 95, 34, 20, -25],
    [1340, 228, 22, 40, -8], [1428, 200, 26, 64, -10], [1470, 184, 48, 44, -15], [1527, 152, 16, 26, -20], [1525, 258, 44, 44, -18], [1055, 307, 24, 20, -15], [1314, 335, 36, 50, -35], [1378, 292, 18, 26, -20], [1348, 448, 24, 30, -40],
    [1487, 407, 24, 34, -35], [1455, 388, 22, 30, -35], [1425, 330, 22, 36, -35], [1468, 300, 26, 34, -40], [1555, 380, 26, 34, -35], [1440, 352, 30, 22, -35], [1156, 525, 20, 22, -30], [1130, 470, 22, 20, -30], [1165, 448, 22, 30, -30],
    [794, 958, 44, 48, -30], [738, 994, 40, 44, -25], [938, 942, 24, 26, -20], [885, 992, 38, 38, -40], [774, 1062, 30, 30, -25], [837, 1034, 40, 30, -30], [685, 1064, 52, 50, 45], [361, 1070, 24, 34, 30], [386, 967, 28, 36, 30],
    [290, 1016, 34, 54, -15], [320, 998, 16, 44, -15], [220, 1056, 38, 34, -14], [155, 1086, 34, 30, 0], [93, 1086, 36, 50, 4], [88, 1148, 36, 36, 0], [160, 1148, 44, 36, 0], [35, 815, 70, 60, -5], [46, 597, 34, 16, -6], [47, 672, 22, 50, -4], [68, 668, 16, 52, -4],
    [290, 680, 50, 200, -2], [360, 500, 60, 70, -4], [1320, 1000, 26, 80, -20], [1405, 1060, 30, 60, -10], [1450, 1130, 40, 40, -20], [1250, 1100, 24, 44, -15], [1510, 1100, 40, 50, -30], [1555, 940, 26, 60, 30], [1410, 930, 24, 40, 20],
    [630, 842, 24, 26, 0], [368, 790, 20, 50, 0], [520, 1110, 60, 60, -30], [720, 1110, 30, 40, -40],
  ],
};

// Shops and other highlighted blocks
const AMBER = {
  A: [
    [60, 535, 24, 60, -14], [455, 525, 46, 44, 28], [470, 640, 20, 100, -15], [596, 610, 96, 52, -8], [618, 682, 108, 20, -8], [315, 555, 40, 60, 35], [506, 746, 22, 30, -15], [516, 836, 28, 34, -20], [522, 905, 46, 38, 30],
    [640, 800, 80, 24, -18], [655, 832, 80, 20, -18], [665, 866, 60, 44, -18], [675, 910, 70, 44, -15], [680, 965, 44, 34, -18], [700, 1014, 36, 40, -15], [393, 852, 16, 36, 8], [103, 935, 34, 40, 0], [608, 1056, 26, 30, -20], [590, 1120, 40, 50, 30],
    [1010, 548, 28, 50, 0], [620, 40, 50, 26, -25], [370, 35, 40, 44, -10],
  ],
  B: [
    [640, 20, 24, 44, -15], [760, 60, 60, 40, -10], [675, 90, 24, 40, -15], [710, 170, 18, 26, -15], [815, 185, 30, 60, -20], [853, 265, 26, 34, 25], [780, 335, 26, 70, -14], [826, 365, 18, 30, -20], [745, 452, 34, 20, 0], [814, 445, 74, 30, -3],
    [1072, 435, 50, 90, 15], [1130, 445, 50, 60, 0], [1194, 458, 66, 60, -4], [1194, 360, 48, 100, -4], [1150, 400, 40, 36, -8], [1360, 410, 74, 66, -2], [1425, 390, 20, 100, 0], [1455, 390, 18, 100, 0], [1520, 340, 100, 160, -4],
    [230, 620, 38, 50, 0], [370, 565, 30, 50, 0], [402, 570, 34, 50, 0], [317, 625, 24, 70, 0], [586, 590, 40, 70, 0], [654, 600, 80, 50, 3], [780, 608, 40, 60, 0], [870, 640, 34, 110, -3], [955, 620, 34, 100, 0], [1020, 630, 40, 96, 0],
    [1128, 590, 30, 60, 0], [1116, 705, 40, 66, 0], [1320, 590, 40, 90, 0], [1290, 692, 60, 20, -4], [1187, 770, 20, 90, 0], [1188, 825, 24, 44, 0], [1137, 950, 20, 100, 2], [1032, 942, 32, 54, 0], [1200, 990, 34, 80, 0], [1434, 1090, 40, 44, 12],
    [1480, 545, 170, 20, -7], [1080, 1160, 100, 20, -3], [1197, 1150, 30, 30, 0], [1131, 1062, 16, 36, 0], [724, 690, 24, 60, 0],
  ],
  D: [
    [160, 388, 30, 56, -4], [195, 355, 30, 110, -4], [225, 350, 30, 110, -4], [98, 380, 36, 70, -4], [186, 512, 134, 24, -6], [478, 350, 34, 40, 0], [505, 352, 28, 28, 0], [568, 305, 30, 84, 5], [715, 285, 28, 80, 0], [740, 290, 18, 80, 0],
    [838, 138, 60, 62, 0], [862, 190, 20, 50, 0], [850, 290, 60, 36, -3], [915, 290, 50, 16, 0], [1068, 250, 30, 50, 0], [1196, 187, 124, 92, -5], [984, 750, 34, 64, -5], [15, 540, 40, 30, -5],
  ],
  E: [[1092, 1070, 90, 130, -6], [1222, 1080, 36, 36, -14], [1300, 1040, 24, 30, -8]],
  F: [[180, 145, 46, 76, 0], [97, 170, 26, 50, 0], [270, 540, 78, 70, -3], [145, 888, 134, 44, -5], [1298, 495, 30, 36, 20], [836, 60, 24, 30, 0]],
};

const PINK = { B: [[910, 655, 48, 130, 0], [1203, 620, 40, 130, -4], [1272, 590, 34, 80, 0], [860, 215, 80, 40, -30], [972, 740, 14, 28, 0]] };

const nearRoad = (x, y, r) =>
  ROADS.some(({ w, pts }) =>
    pts.some((p, i) => {
      if (!i) return false;
      const q = pts[i - 1];
      const dx = p[0] - q[0];
      const dy = p[1] - q[1];
      const t = Math.max(0, Math.min(1, ((x - q[0]) * dx + (y - q[1]) * dy) / (dx * dx + dy * dy || 1)));
      return Math.hypot(x - q[0] - t * dx, y - q[1] - t * dy) < w / 2 + r;
    })
  );

const blocksOf = (data) =>
  Object.entries(data).flatMap(([s, list]) =>
    list.map(([x, y, w, h, r]) => {
      const [cx, cy] = at(s, x, y);
      return { cx, cy, w: Math.round(w / SHEETS[s][2]), h: Math.round(h / 3), r };
    })
  );

const fixed = blocksOf(LOOSE);
const shops = blocksOf(AMBER);
const malls = blocksOf(PINK);

// Small houses filling the dense quarters: [x0, y0, x1, y1, turn, cell]
const QUARTERS = [
  [12, 165, 115, 275, 35, 13],
  [60, 165, 190, 240, -40, 13],
  [170, 0, 400, 12, 5, 14],
  [265, 430, 360, 520, 0, 15],
  [205, 400, 330, 500, -30, 14],
  [220, 600, 470, 690, 0, 18],
  [1420, 480, 1600, 700, -20, 30],
  [1700, 430, 1890, 640, -35, 20],
  [1800, 660, 1895, 745, -25, 18],
  [1250, 340, 1560, 400, 0, 17],
];
const infill = [];
let seed = 7;
const rnd = () => {
  seed = (seed * 1103515245 + 12345) % 2147483648;
  return seed / 2147483648;
};
QUARTERS.forEach(([x0, y0, x1, y1, r, cell]) => {
  for (let y = y0; y < y1; y += cell) {
    for (let x = x0; x < x1; x += cell) {
      const b = { cx: Math.round(x + rnd() * 3), cy: Math.round(y + rnd() * 3), w: 7 + Math.round(rnd() * 4), h: 7 + Math.round(rnd() * 5), r };
      const clear = [...fixed, ...shops].every((o) => Math.hypot(o.cx - b.cx, o.cy - b.cy) > (Math.max(o.w, o.h) + 12) / 2);
      if (clear && rnd() > 0.15 && !nearRoad(b.cx, b.cy, 5)) infill.push(b);
    }
  }
});

const Block = ({ b, fill, stroke }) => (
  <rect x={b.cx - b.w / 2} y={b.cy - b.h / 2} width={b.w} height={b.h} transform={`rotate(${b.r} ${b.cx} ${b.cy})`} fill={fill} stroke={stroke} />
);

/* ------------------------------------------------------------------ */
/* Pins                                                                */
/* ------------------------------------------------------------------ */

const GREY = '#78909c';
const INDIGO = '#7986cb';
const BLUE = '#5491f5';
const T = { grey: '#587380', indigo: '#5c6bc0', blue: '#3f83f0', green: '#2b8b46', teal: '#12919c', orange: '#dd7a0f', red: '#e0393e', dark: '#c5221f', pink: '#e02569', road: '#6b7780' };

const GLYPHS = {
  om: (
    <g fill="none" stroke="#fff" strokeWidth="1.7" strokeLinecap="round">
      <path d="M-5.500-3c1-1.600 4.200-1.700 4.300.6 0 1.500-1.300 2-2.500 2 1.800-.1 3.600.6 3.500 2.500-.1 2.400-4.800 2.700-6 .3" />
      <path d="M-1.500.2c2 .4 2.300-1.900 4.200-1.900 1.700 0 2.600 1.400 2.300 3-.3 1.900-2.700 2.400-3.500.9" />
      <path d="M.3-5.200c1.200 1.400 3.200 1.300 4.200-.3M2.500-6.800v.2" />
    </g>
  ),
  bank: (
    <g>
      <rect x="-7.500" y="-5" width="15" height="10" rx="1" fill="#fff" />
      <circle cx="-5" cy="-2.300" r="1.400" fill={INDIGO} />
      <path d="M-3-.5h1v4M0-.5h2v4h-2zM4-.5h2v4h-2z" fill="none" stroke={INDIGO} />
    </g>
  ),
  bag: (
    <g>
      <path d="M-5.500-2.500h11v8h-11z" fill="#fff" />
      <path d="M-2.500-2.500v-1.200a2.500 2.500 0 0 1 5 0v1.200" fill="none" stroke="#fff" strokeWidth="1.500" />
      <path d="M-2.500 0a2.500 2.500 0 0 0 5 0" fill="none" stroke={BLUE} strokeWidth="1.500" />
    </g>
  ),
  grad: <path d="M0-5.500l8 4-8 4-8-4zM-4.500 1.500l4.500 2.300 4.500-2.300v3l-4.500 2.500-4.500-2.500zM7-1h1.200v5h-1.200z" fill="#fff" />,
  tree: <path d="M0-8l4 5h-2l3.500 4.500h-2l2.500 4h-5v2.500h-2v-2.500h-5l2.500-4h-2l3.500-4.500h-2z" fill="#fff" />,
  food: <path d="M-5.500-6h1.200v4h1v-4h1.200v4h1v-4h1.200v5q0 1.700-1.800 2v5.500h-2v-5.500q-1.800-.3-1.800-2zM1.500-3.500q0-2.500 3-3v13h-2v-5h-1z" fill="#fff" />,
  museum: <path d="M-7-2.500l7-4 7 4v1.300h-14zM-5.500 0h2v4h-2zM-1 0h2v4h-2zM3.500 0h2v4h-2zM-7 4.800h14v1.700h-14z" fill="#fff" />,
  moon: <path d="M-1-5.500a5.500 5.500 0 1 0 4.800 8.200a4.600 4.600 0 1 1-4.800-8.200zM4.500-5.500l.8 1.700 1.800.2-1.300 1.200.4 1.800-1.700-.9-1.600.9.3-1.800-1.300-1.200 1.800-.2z" fill="#fff" />,
  film: <path fillRule="evenodd" d="M-5.500-6.500h11v13h-11zM-4.500-5v2h1.500v-2zM-4.500-1v2h1.500v-2zM-4.500 3v2h1.500v-2zM3-5v2h1.500v-2zM3-1v2h1.500v-2zM3 3v2h1.500v-2z" fill="#fff" />,
  camera: <path fillRule="evenodd" d="M-2-5h5l1 1.500h3.500v9h-14v-7h3.500zM.8-1.500a2.700 2.700 0 1 0 .1 0zM-6-6.500h1.200v1.500h1.500v1.200h-1.500v1.500h-1.200v-1.500h-1.500v-1.200h1.500z" fill="#fff" />,
  hospital: <path d="M-5-6h3v4.500h4v-4.500h3v12h-3v-4.500h-4v4.500h-3z" fill="#fff" />,
  atm: (
    <g>
      <path d="M-6-6.500h12v3h-1.500v9.500h-9v-9.500h-1.500z" fill="#fff" />
      <path d="M2-2.500h-3.500v2.500h3v2.500h-3.500M0-3.500v7.500" fill="none" stroke={INDIGO} />
    </g>
  ),
  police: <path d="M-2-8h5l1 2.500h-7zM-2-5h5q0 3-2.500 3t-2.500-3zM-2-1h5q2 0 2 2v6h-7l-1-3-4 2-1.500-3.500 2-.5.5 1.500z" fill="#fff" />,
  dot: <circle r="4" fill="#fff" />,
};

const PINS = [
  ['A', 293, 427, 'bag', BLUE], ['A', 147, 25, 'bag', BLUE], ['A', 608, 728, 'om', GREY], ['A', 102, 833, 'tree', '#34a853'], ['A', 578, 897, 'om', GREY], ['A', 202, 984, 'om', GREY],
  ['B', 298, 118, 'om', GREY], ['B', 794, 72, 'bank', INDIGO], ['B', 937, 187, 'police', GREY], ['B', 528, 277, 'om', GREY], ['B', 315, 431, 'bank', INDIGO], ['B', 971, 419, 'bank', INDIGO],
  ['B', 1129, 472, 'bank', INDIGO], ['B', 725, 531, 'bank', INDIGO], ['B', 497, 543, 'grad', GREY], ['B', 1361, 638, 'moon', GREY], ['B', 1188, 922, 'food', '#f29900'], ['B', 609, 1035, 'om', GREY],
  ['B', 135, 978, 'dot', GREY], ['B', -12, 518, 'hospital', '#f06292'],
  ['C', 1442, 207, 'om', GREY], ['C', 687, 631, 'om', GREY], ['C', 878, 775, 'om', GREY], ['C', 1238, 751, 'om', GREY], ['C', 1212, 933, 'om', GREY], ['C', 165, 1003, 'bank', INDIGO],
  ['D', 756, 104, 'grad', GREY], ['D', 1073, 165, 'bank', INDIGO], ['D', 1372, 28, 'film', '#12b5cb'], ['D', 473, 249, 'bag', BLUE], ['D', 84, 293, 'bag', BLUE], ['D', 66, 427, 'dot', GREY], ['D', 1191, 351, 'dot', GREY],
  ['D', 1000, 645, 'bank', INDIGO], ['D', 1450, 744, 'museum', GREY], ['D', 1131, 963, 'om', GREY],
  ['E', 360, 193, 'camera', '#12b5cb'], ['E', 852, 478, 'om', GREY], ['E', 1100, 1014, 'hospital', '#ec6459'], ['E', 1289, 950, 'grad', GREY], ['E', 391, 1018, 'bag', BLUE], ['E', 836, 1074, 'atm', INDIGO],
  ['F', 275, 405, 'food', '#f29900'], ['F', 383, 416, 'museum', GREY], ['F', 983, 348, 'bag', BLUE], ['F', 1063, 339, 'om', GREY], ['F', 1385, 474, 'om', GREY], ['F', 163, 798, 'bank', INDIGO],
  ['F', 618, 726, 'tree', '#34a853'], ['F', 541, 997, 'museum', GREY], ['F', 1049, 1104, 'dot', GREY], ['F', 1580, 980, 'dot', GREY],
];

const PIN_PATH = 'M0 36C-1.500 26-12.300 21-12.300 12.300a12.300 12.300 0 0 1 24.600 0C12.300 21 1.500 26 0 36z';

/* ------------------------------------------------------------------ */
/* Labels: [sheet, x, baseline, anchor, colour, text, size]            */
/* ------------------------------------------------------------------ */

const LABELS = [
  ['A', 108, 70, 'end', 'blue', 'Railway'], ['A', 0, 122, 'start', 'blue', 's C'], ['A', 612, 85, 'start', 'grey', 'Navagraha Temple'], ['A', 30, 300, 'end', 'grey', 'ap'],
  ['A', 225, 590, 'start', 'blue', 'Bara Bazar Pandu'], ['A', 172, 765, 'end', 'green', 'Accounts'], ['A', 172, 817, 'end', 'green', 'Gol Park'], ['A', 647, 802, 'start', 'grey', 'Durga Mandir -'],
  ['A', 316, 972, 'start', 'grey', 'Shiv Mandir'], ['B', 133, 38, 'start', 'grey', 'Durga Mandir'], ['C', 236, 935, 'end', 'indigo', 'Ujjivan Financial'], ['C', 236, 988, 'end', 'indigo', 'Services Ltd., Maligaon'],
  ['A', 725, 1112, 'start', 'indigo', 'Central Bank of India'], ['B', 725, 55, 'start', 'indigo', '- Maligaon Branch'],
  ['B', 868, 120, 'start', 'grey', 'Jalukbari Police'], ['B', 868, 172, 'start', 'grey', 'Station, Maligaon'], ['B', 338, 192, 'start', 'grey', 'Hari temple'], ['B', 853, 402, 'start', 'indigo', 'Axis Bank'],
  ['B', 458, 442, 'start', 'grey', 'Durga Kali Mandir'], ['B', 1143, 346, 'start', 'blue', 'PARAMOUNT HONDA'], ['D', 46, 390, 'end', 'blue', 'Delivery', 14], ['B', 5, 478, 'start', 'road', 'nk Rd'],
  ['B', 116, 596, 'start', 'indigo', 'IndusInd Bank'], ['B', 793, 636, 'start', 'indigo', 'Punjab National Bank'], ['B', 428, 706, 'start', 'grey', 'Bhadra IAS Academy'], ['B', 428, 758, 'start', 'grey', '- Best UPSC & APSC…'],
  ['B', 59, 678, 'end', 'pink', '979'], ['B', 59, 732, 'end', 'pink', 'va…'], ['B', 1339, 590, 'start', 'grey', 'DTDC , Maligaon'], ['B', 65, 908, 'start', 'grey', 'Kamakhya'], ['B', 355, 960, 'end', 'grey', 'Railway Station'],
  ['B', 540, 1018, 'start', 'grey', 'Temple'], ['B', 1228, 950, 'start', 'orange', 'Maa Manasha'], ['B', 1228, 1002, 'start', 'orange', 'Hotel and Resturent'], ['B', 1228, 1046, 'start', 'orange', 'Takeout • Delivery', 14],
  ['C', 1404, 280, 'end', 'grey', 'Trilok Baba'], ['C', 618, 563, 'start', 'grey', 'Kamkhya Mandir'], ['C', 618, 615, 'start', 'grey', 'Main Pujari Ji'], ['C', 698, 938, 'start', 'grey', 'Shani Mandir'],
  ['C', 1278, 824, 'start', 'grey', 'Bipadnashini Temple'], ['C', 1251, 980, 'start', 'grey', 'Shree Shree Radha'], ['C', 1251, 1033, 'start', 'grey', 'Madhab Sevashram'], ['C', 853, 1102, 'start', 'dark', 'Kailash Apartment'],
  ['D', 541, 192, 'end', 'blue', 'Royal Enfield Showroom'], ['D', 543, 236, 'end', 'blue', 'Delivery', 14], ['D', 796, 177, 'start', 'grey', 'D S K'], ['D', 1144, 330, 'end', 'indigo', 'Ujjivan Small Finance'],
  ['D', 1144, 382, 'end', 'indigo', 'Bank at Maligaon Gate…'], ['D', 1411, 102, 'start', 'teal', 'Pragjyoti Cinema'], ['D', 1122, 515, 'start', 'grey', 'Northeast Frontier'], ['D', 1122, 567, 'start', 'grey', 'Railway Office'],
  ['D', 1445, 390, 'start', 'orange', 'Dibrugarh Bairagimoth'], ['D', 1520, 677, 'end', 'grey', 'Office of the'], ['D', 1520, 729, 'end', 'grey', 'General Manager'], ['D', 869, 1128, 'start', 'grey', 'Maligaon KaliBari'],
  ['E', 26, 358, 'start', 'teal', 'Kamakhya View Point'], ['E', 814, 527, 'end', 'grey', 'Jai Durga Mandir'], ['E', 814, 579, 'end', 'grey', 'Kamakhya Dham'], ['E', 1268, 754, 'start', 'red', 'Sanjevani Hospital'],
  ['E', 324, 962, 'start', 'blue', 'Wine Shop'], ['E', 324, 1004, 'start', 'blue', 'Wine store', 14], ['E', 1168, 947, 'end', 'red', 'Swagat Super Speciality'], ['E', 1168, 999, 'end', 'red', 'Surgical Hospital'],
  ['E', 1513, 882, 'start', 'indigo', 'HP'], ['E', 1488, 934, 'start', 'indigo', 'Bima'], ['E', 797, 1123, 'end', 'indigo', 'SBI ATM GM CON.'], ['F', 797, 66, 'end', 'indigo', 'HEADQUARTER…'],
  ['F', 1101, 413, 'start', 'grey', 'Sankardev Namghar'], ['F', 451, 582, 'end', 'grey', 'NF Railway'], ['F', 451, 633, 'end', 'grey', 'Office of the GM'], ['F', 96, 730, 'start', 'indigo', 'State Bank of India'],
  ['F', 96, 782, 'start', 'indigo', '- Maligaon Branch'], ['F', 1050, 512, 'end', 'blue', 'Bulu PCO'], ['F', 1050, 556, 'end', 'blue', 'Shopping mall', 14], ['F', 1119, 638, 'start', 'grey', 'Dhamodhar Dham'],
  ['F', 552, 890, 'start', 'green', 'Tinkunia Field'], ['F', 474, 1158, 'start', 'grey', 'Office of the DY'], ['F', 1095, 1175, 'start', 'grey', '202A Railway quarter'],
];

// Names that follow a road: [id, curve, text, size]
const ROAD_NAMES = [
  ['atr1', 'M763 518L903 500', 'Assam Trunk Rd', 18],
  ['atr2', 'M1245 464L1383 447', 'Assam Trunk Rd', 18],
  ['atr3', 'M1471 434L1609 417', 'Assam Trunk Rd', 18],
  ['atr4', 'M1698 400L1830 363', 'Assam Trunk Rd', 18],
  ['rcr', 'M236 352Q266 398 302 462', 'Railway Colony Rd', 14],
  ['msg', 'M991 563Q992 640 1012 668Q1026 690 1062 705', 'Maligaon Shuttle Gate Rd', 14],
  ['kmr1', 'M1426 80Q1480 54 1560 46', 'Kamakhya Mandir Rd', 14],
  ['kmr2', 'M1572 43Q1640 62 1710 50', 'Kamakhya Mandir Rd', 14],
  ['kmr3', 'M1768 16Q1820 4 1900 -2', 'Kamakhya Mandir Rd', 14],
  ['ort', 'M156 -12L168 14', 'Port', 14],
];

const ARROWS = [
  ['B', 222, 461, 0], ['B', 397, 503, 180], ['B', 765, 489, 0], ['B', 884, 531, 180], ['B', 1339, 483, 0], ['B', 1401, 506, 180], ['B', 718, 134, -110],
  ['D', 1426, 302, 175], ['F', 426, 191, -5], ['F', 429, 223, 172], ['F', 960, 100, -8], ['F', 967, 135, 170], ['E', 1487, 1064, 160],
];

function MapDrawing() {
  return (
    <svg viewBox="0 0 1899 750" className="h-[750px] w-[1899px] shrink-0" role="img" aria-label="Map of Maligaon, Guwahati">
      <rect width="1899" height="750" fill="#f8f9fb" />
      <g stroke="#f1f2f4">
        <path d="M211 0V750M531 0V750M851 0V750M1171 0V750M1491 0V750M1812 0V750M0 42H1899M0 362H1899M0 682H1899" />
      </g>
      <g strokeWidth="1">
        {infill.map((b, i) => <Block key={`i${i}`} b={b} fill="#f1f2f4" stroke="#dcdee3" />)}
        {fixed.map((b, i) => <Block key={`f${i}`} b={b} fill="#f1f2f4" stroke="#dcdee3" />)}
        {malls.map((b, i) => <Block key={`m${i}`} b={b} fill="#fef3ec" stroke="#fdebe0" />)}
        {shops.map((b, i) => <Block key={`s${i}`} b={b} fill="#fffbed" stroke="#fde6a8" />)}
      </g>
      <g fill="none" stroke="#e3e4e8">
        <path d="M1899 540L1565 750M1899 552L1580 750M0 665Q120 715 262 743Q400 742 640 757" />
      </g>
      <g fill="none" strokeLinecap="round" strokeLinejoin="round">
        {ROADS.map((r, i) => <path key={`c${i}`} d={r.d} stroke="#dcdee4" strokeWidth={r.w + 2} />)}
        {ROADS.map((r, i) => <path key={`r${i}`} d={r.d} stroke="#ffffff" strokeWidth={r.w} />)}
        <path d="M225 482l9-4" stroke="#34a853" strokeDasharray="4 3" />
      </g>
      {ARROWS.map(([s, x, y, r], i) => {
        const [cx, cy] = at(s, x, y);
        return <path key={i} transform={`translate(${cx} ${cy}) rotate(${r})`} d="M-7-1h8v-3l6 4-6 4v-3h-8z" fill="#c5c9de" />;
      })}
      <g fontFamily="Roboto, sans-serif" stroke="#ffffff" strokeWidth="3" strokeLinejoin="round" paintOrder="stroke" fill={T.road}>
        {ROAD_NAMES.map(([id, d, text, size]) => (
          <React.Fragment key={id}>
            <path id={id} d={d} fill="none" stroke="none" />
            <text fontSize={size}><textPath href={`#${id}`}>{text}</textPath></text>
          </React.Fragment>
        ))}
      </g>
      {PINS.map(([s, x, y, kind, colour], i) => {
        const [cx, cy] = at(s, x, y);
        return (
          <g key={i} transform={`translate(${cx} ${cy})`}>
            <path d={PIN_PATH} fill={colour} stroke="#ffffff" strokeOpacity="0.6" />
            <g transform="translate(0 13)">{GLYPHS[kind]}</g>
          </g>
        );
      })}
      <g fontFamily="Roboto, sans-serif" stroke="#ffffff" strokeWidth="3" strokeLinejoin="round" paintOrder="stroke">
        {LABELS.map(([s, x, y, anchor, colour, text, size = 18], i) => {
          const [cx, cy] = at(s, x, y);
          return <text key={i} x={cx} y={cy} textAnchor={anchor} fontSize={size} fill={T[colour]}>{text}</text>;
        })}
      </g>
      <g transform="translate(948.500 331)">
        <path d="M0 47C-2 34-16 27-16 16a16 16 0 0 1 32 0C16 27 2 34 0 47z" fill="#ea4335" stroke="#b9281c" strokeWidth="0.800" />
        <circle cy="16" r="6" fill="#b31412" />
      </g>
      <text x="919" y="724" fontFamily="Lato, sans-serif" fontSize="20" fontWeight="500" stroke="#ffffff" strokeWidth="3" paintOrder="stroke">
        <tspan fill="#4285f4">G</tspan>
        <tspan fill="#ea4335">o</tspan>
        <tspan fill="#fbbc05">o</tspan>
        <tspan fill="#4285f4">g</tspan>
        <tspan fill="#34a853">l</tspan>
        <tspan fill="#ea4335">e</tspan>
      </text>
    </svg>
  );
}

function MapPanel() {
  return (
    <section className="relative mt-[13px] flex h-[750px] justify-center overflow-hidden bg-[#f8f9fb] font-[Roboto,sans-serif]">
      <MapDrawing />

      <div className="absolute left-[13px] top-[13px] flex h-[147px] w-[376px] justify-between rounded-[2px] bg-white pl-[15px] pr-6 pt-3 shadow-[0_1px_5px_-1px_rgba(0,0,0,0.3)]">
        <div>
          <h2 className="text-[18px] font-medium leading-[22px] text-black">Kailash Apartment</h2>
          <p className="mt-[7px] text-[15px] leading-[18px] text-[#5b5b5b]">
            5P62+499, Maligaon, Guwahati,
            <br />
            Assam 781010
          </p>
          <p className="mt-[7px] flex items-center text-[15px] leading-[20px] text-[#427fed]">
            <span className="text-[18px] text-[#e7711b]">5.0</span>
            <svg viewBox="0 0 70 14" className="ml-1 h-[14px] w-[70px]" role="img" aria-label="5 stars">
              {[0, 1, 2, 3, 4].map((n) => (
                <path key={n} transform={`translate(${n * 14} 0)`} d="M7 0l1.700 5h5.100l-4.100 3.100 1.500 5-4.200-3-4.200 3 1.500-5-4.100-3.100h5.100z" fill="#e77400" />
              ))}
            </svg>
            <a href="#reviews" className="ml-3">1 review</a>
          </p>
          <a href="#larger" className="mt-3 block text-[15px] leading-[18px] text-[#427fed]">View larger map</a>
        </div>
        <a href="#directions" className="mt-1 flex flex-col items-center text-[15px] leading-[18px] text-[#427fed]">
          <svg viewBox="0 0 24 24" className="h-6 w-6" aria-hidden="true">
            <path d="M1 3l3-3 8 8-3 4z" fill="#b8cdfb" />
            <path d="M9 24v-9q0-3 2-5l5-5-4-4h12v12l-4-4-5 5q-1 1-1 3v7z" fill="#6b9bf8" />
          </svg>
          <span className="mt-[6px]">Directions</span>
        </a>
      </div>

      <button type="button" aria-label="Satellite view" className="absolute bottom-[28px] left-[13px] h-[52px] w-[52px] overflow-hidden border-2 border-white shadow-[0_1px_5px_rgba(0,0,0,0.5)]">
        <svg viewBox="0 0 48 48" className="h-full w-full" aria-hidden="true">
          <rect width="48" height="48" fill="#2f473f" />
          <path d="M0 30l14-4 8 3 12-6 14-8v12l-12 4-14-2-12 5-10 2z" fill="#4a5a50" />
          <path d="M22 14l7-6 4 10 3 8-8 6-10 3 2-12z" fill="#575d4e" />
          <path d="M0 36l16-2 14 2 18 5v7h-48z" fill="#23433b" />
          <path d="M2 4l14-2-4 12-10 4zM34 4l12 2v8l-8-2z" fill="#1f4a38" />
          <path d="M24 14l4 2-2 4zM18 28l3 1-1 3zM32 22l3 2-3 2zM8 32l4 1-3 2zM26 26l3 0-2 3zM12 24l3 1-2 2z" fill="#948c74" />
        </svg>
      </button>

      <div className="absolute bottom-[30px] right-3 flex w-[50px] flex-col items-center rounded-[2px] bg-white shadow-[0_1px_4px_rgba(0,0,0,0.3)]">
        <button type="button" aria-label="Zoom in" className="flex h-[50px] w-full items-center justify-center">
          <svg viewBox="0 0 22 22" className="h-[22px] w-[22px]" aria-hidden="true"><path d="M9 0h4v9h9v4h-9v9h-4v-9h-9v-4h9z" fill="#666666" /></svg>
        </button>
        <span className="h-px w-[37px] bg-[#e6e6e6]" />
        <button type="button" aria-label="Zoom out" className="flex h-[50px] w-full items-center justify-center">
          <svg viewBox="0 0 22 22" className="h-[22px] w-[22px]" aria-hidden="true"><path d="M0 9h22v4h-22z" fill="#666666" /></svg>
        </button>
      </div>

      <div className="absolute bottom-0 right-0 flex gap-5 bg-white/70 pr-2 text-[12px] leading-[16px] text-[#111111]">
        <button type="button">Keyboard shortcuts</button>
        <span>Map data ©2021</span>
        <a href="#terms">Terms of Use</a>
        <a href="#report">Report a map error</a>
      </div>
    </section>
  );
}

/* ------------------------------------------------------------------ */
/* Page                                                                */
/* ------------------------------------------------------------------ */

function ChefMark() {
  return (
    <svg viewBox="0 0 38 52" className="h-[52px] w-[38px]" aria-hidden="true" fill="none" stroke="url(#gold)" strokeWidth="1.200" strokeLinecap="round" strokeLinejoin="round">
      <defs>
        <linearGradient id="gold" x1="0" x2="1">
          <stop offset="0" stopColor="#b98a45" />
          <stop offset="0.500" stopColor="#f0e08a" />
          <stop offset="1" stopColor="#b98a45" />
        </linearGradient>
      </defs>
      <path d="M9 28v-9q-4.500-1.500-5-6 .5-6.500 7-7 2 0 3 1 1-4.500 5-5 4 .5 5 5 1-1 3-1 6.500.5 7 7-.5 4.500-5 6v9M9 29q10 3 20 0v3q-.5 2.500-2 3-8 1.500-16 0-1.500-.5-2-3zM14.500 19v5M19 17v10M23.500 19v5" />
      <path d="M4 51q-4-1-3-5 2.500-6 9.500-8 8.500-1.500 17 0 7 2 9.500 8 1 4-3 5-15-1.500-30 0zM9.500 45q-1-3 2.500-5M18 44q-1-3 1-6M27 45q0-3 2.500-4.500" />
    </svg>
  );
}

function Header() {
  const links = [['ABOUT US', '#about'], ['MENU', '#menu'], ['CONTACT US', '#contact'], ['LOGIN/SIGNUP', '#login']];
  return (
    <header className="flex h-[102px] justify-between border-t border-[#222222] bg-white pl-[103px] pr-24 shadow-[0_30px_60px_-12px_rgba(0,0,0,0.15)]">
      <a href="#home" className="mt-[22px] flex items-start gap-3">
        <ChefMark />
        <span className="flex flex-col text-[#4b1587]">
          <span className="font-['Amatic_SC',sans-serif] text-[44px] font-bold italic leading-[32px]">THE PASTRY SHOP</span>
          <span className="mt-[11px] font-['Bebas_Neue','Anton',sans-serif] text-[15px] leading-[12px]">LET YOUR CRAVINGS MEET US</span>
        </span>
      </a>
      <nav className="mt-[52px] flex h-[22px] items-center gap-[30px] text-[19px] font-bold text-black">
        {links.map(([label, href]) => <a key={label} href={href}>{label}</a>)}
      </nav>
    </header>
  );
}

function Hours() {
  return (
    <section className="bg-[#eee83c] pb-[37px] pt-[60px] text-center text-[25px] leading-[35px] text-[#333333]">
      <h2 className="text-[51px] font-bold leading-[58px] tracking-[2px] text-[#ee3ccd]">HOURS AND LOCATION</h2>
      <p className="mt-[37px]">Maligaon, Guwahati-11, Assam<br />Call Us: +919365741983</p>
      <h3 className="mt-[60px] text-[32px] font-bold leading-[36px] tracking-[2px] text-black">STORE HOURS</h3>
      <p className="mt-[25px]">Monday-Sunday: 9AM to 9PM</p>
      <h3 className="mt-[61px] text-[32px] font-bold leading-[36px] tracking-[2px] text-black">COVID-19 UPDATE</h3>
      <p className="mx-auto mt-[25px] max-w-[740px]">
        We are taking safety measures very seriously. We ask for you to come prepare with your mask in order to enter, and follow social distancing marks on the floor.
        <br />
        Currently we are not accepting cash payments - only credit!
        <br />
        Thank you and stay safe!
      </p>
    </section>
  );
}

function LinkRow({ items }) {
  return (
    <div className="flex justify-center gap-[30px] text-[19px] leading-[22px] text-[#ab31d9]">
      {items.map((t) => <a key={t} href={`#${t.toLowerCase().replaceAll(' ', '-')}`}>{t}</a>)}
    </div>
  );
}

const FA = {
  facebook: 'M1343 12v264h-157q-86 0-116 36t-30 108v189h293l-39 296h-254v759h-306v-759h-255v-296h255v-218q0-186 104-288.500t277-102.500q147 0 228 12z',
  linkedin: 'M477 625v991h-330v-991h330zm21-306q1 73-50.500 122t-135.500 49h-2q-82 0-132-49t-50-122q0-74 51.500-122.500t134.500-48.500 133 48.500 51 122.500zm1166 729v568h-329v-530q0-105-40.500-164.500t-126.500-59.500q-63 0-105.500 34.500t-63.500 85.500q-11 30-11 81v553h-329q2-399 2-647t-1-296l-1-48h329v144h-2q20-32 41-56t56.500-52 87-43.500 114.500-15.500q171 0 275 113.500t104 332.500z',
  phone: 'M1600 1240q0 27-10 70.500t-21 68.500q-21 50-122 106-94 51-186 51-27 0-53-3.500t-57-12.500-47-14.500-55.500-20.500-49.500-18q-98-35-175-83-127-79-264-216t-216-264q-48-77-83-175-3-9-18-49.500t-20.500-55.500-14.500-47-12.500-57-3.500-53q0-92 51-186 56-101 106-122 25-11 68.500-21t70.500-10q14 0 21 3 18 6 53 76 11 19 30 54t35 63.500 31 53.500q3 4 17.500 25t21.500 35.500 7 28.500q0 20-28.500 50t-62 55-62 53-28.500 46q0 9 5 22.500t8.500 20.500 14 24 11.500 19q76 137 174 235t235 174q2 1 19 11.500t24 14 20.500 8.500 22.500 5q18 0 46-28.500t53-62 55-62 50-28.500q14 0 28.500 7t35.500 21.500 25 17.500q25 15 53.500 31t63.500 35 54 30q70 35 76 53 3 7 3 21z',
  mail: 'M1792 710v794q0 66-47 113t-113 47h-1472q-66 0-113-47t-47-113v-794q44 49 101 87 362 246 497 345 57 42 92.500 65.500t94.500 48 110 24.500h2q51 0 110-24.500t94.500-48 92.500-65.500q170-123 498-345 57-39 100-87zm0-294q0 79-49 151t-122 123q-376 261-468 325-10 7-42.500 31t-54 38.500-52 32.500-57.500 27-50 9h-2q-23 0-50-9t-57.500-27-52-32.500-54-38.500-42.500-31q-91-64-262-182.500t-205-142.500q-62-42-117-115.500t-55-136.500q0-78 41.500-130t118.500-52h1472q65 0 112.500 47t47.500 113z',
};

const Glyph = ({ d, box, className }) => (
  <svg viewBox={box} className={className} fill="currentColor" aria-hidden="true"><path d={d} /></svg>
);

function Footer() {
  return (
    <footer className="mt-[46px] border-[12px] border-b-[10px] border-[#ab31d9] bg-[#daf7a6] px-[63px] pb-[77px] pt-[63px]">
      <div className="grid grid-cols-[390px_1fr_430px] pb-9">
        <div className="flex h-[55px] w-[188px] items-center justify-center whitespace-nowrap border-[3px] border-white bg-[#65129c] font-['League_Gothic','Bebas_Neue',sans-serif] text-[34px] leading-none text-[#f3e9fb]">
          THE PASTRY SHOP
        </div>
        <div className="flex flex-col text-center">
          <h4 className="text-[25px] font-bold leading-[28px] text-black">Pages</h4>
          <div className="mt-[19px]"><LinkRow items={['About Us', 'Services', 'Login', 'Signup']} /></div>
          <h4 className="mt-[52px] text-[25px] font-bold leading-[28px] text-black">Documents</h4>
          <div className="mt-[23px]"><LinkRow items={['Privacy Policy', 'Terms of Use', 'Refund Policy']} /></div>
        </div>
        <div className="flex flex-col items-center text-[#ab31d9]">
          <h4 className="text-[25px] font-bold leading-[28px] text-black">Follow Us</h4>
          <div className="mt-[23px] flex h-9 items-end gap-[30px]">
            <a href="#facebook" aria-label="Facebook"><Glyph d={FA.facebook} box="479 0 864 1664" className="h-[36px] w-[19px]" /></a>
            <a href="#instagram" aria-label="Instagram">
              <svg viewBox="0 0 33 33" className="h-[33px] w-[33px]" fill="none" stroke="currentColor" strokeWidth="3" aria-hidden="true">
                <rect x="1.500" y="1.500" width="30" height="30" rx="8" />
                <circle cx="16.500" cy="16.500" r="7" />
                <circle cx="25.300" cy="7.700" r="2" fill="currentColor" stroke="none" />
              </svg>
            </a>
            <a href="#linkedin" aria-label="LinkedIn"><Glyph d={FA.linkedin} box="128 128 1536 1536" className="h-[33px] w-[33px]" /></a>
          </div>
          <h4 className="mt-[43px] text-[25px] font-bold leading-[28px] text-black">Contact Us</h4>
          <div className="mt-[26px] flex h-[33px] items-center gap-[30px]">
            <a href="#phone" aria-label="Phone"><Glyph d={FA.phone} box="192 128 1408 1408" className="h-[30px] w-[30px]" /></a>
            <a href="#whatsapp" aria-label="WhatsApp"><FaWhatsapp className="h-[37px] w-[33px]" /></a>
            <a href="#mail" aria-label="Mail"><Glyph d={FA.mail} box="0 256 1792 1408" className="h-[30px] w-[38px]" /></a>
          </div>
        </div>
      </div>
      <hr className="border-t border-[#eeeeee]" />
      <p className="mt-[27px] text-[18px] leading-[22px] text-[#333333]">Copyright © 2021 The Pastry Shop. All rights reserved.</p>
    </footer>
  );
}

export default function App() {
  return (
    <div className="bg-white font-['Liberation_Sans',Arial,sans-serif]">
      <Header />
      <h1 className="flex h-[187px] items-center justify-center pb-[6px] pr-6 font-['Anton',sans-serif] text-[106px] font-normal leading-none text-[#6a0f6c] [text-shadow:5px_4px_0_#e9c3f3]">
        CONTACT US
      </h1>
      <Hours />
      <MapPanel />
      <address className="flex flex-col gap-[29px] pl-[31px] pt-10 text-[19px] font-bold not-italic leading-[22px] text-[#222222]">
        <p>ADDRESS: Guwahati, Assam</p>
        <p>CALL US: +919365741983</p>
        <p>MAIL: madhubantimitra0902@gmail.com</p>
      </address>
      <Footer />
    </div>
  );
}
